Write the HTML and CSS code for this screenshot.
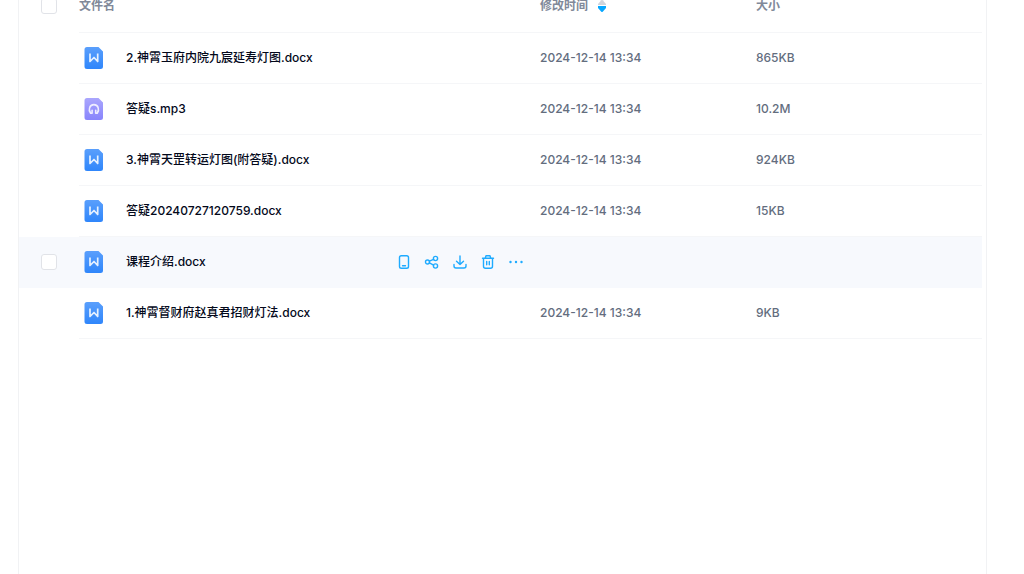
FILE: index.html
```html
<!DOCTYPE html>
<html lang="zh-CN">
<head>
<meta charset="utf-8">
<title>文件列表</title>
<link rel="stylesheet" href="styles.css">
</head>
<body>
<svg class="defs" aria-hidden="true">
  <defs>
    <linearGradient id="blue" x1="0" y1="0" x2="0" y2="1"><stop offset="0" stop-color="#5a9ffc"/><stop offset="1" stop-color="#2f86fb"/></linearGradient>
    <linearGradient id="violet" x1="0" y1="0" x2="0" y2="1"><stop offset="0" stop-color="#aaa6fd"/><stop offset="1" stop-color="#8884fc"/></linearGradient>
    <symbol id="word" viewBox="0 0 20 22">
      <path fill="url(#blue)" d="M3 0h11.500L19 4.500v15a2.500 2.500 0 0 1-2.500 2.500H3a2.500 2.500 0 0 1-2.500-2.500V2.500A2.500 2.500 0 0 1 3 0z"/>
      <path fill="none" stroke="#e6f1ff" stroke-width="1.700" stroke-linejoin="round" d="M6 6.500v8l4-4 3.700 4V6.500"/>
    </symbol>
    <symbol id="audio" viewBox="0 0 20 22">
      <path fill="url(#violet)" d="M3 0h11.500L19 4.500v15a2.500 2.500 0 0 1-2.500 2.500H3a2.500 2.500 0 0 1-2.500-2.500V2.500A2.500 2.500 0 0 1 3 0z"/>
      <path fill="none" stroke="#eeedff" stroke-width="1.600" stroke-linecap="round" stroke-linejoin="round" d="M8.100 12.300v3H6.600C5.400 13.500 5 11.500 5.600 9.800a4.500 4.500 0 0 1 8.600 0c.6 1.700.2 3.700-1 5.500h-1.500v-3"/>
    </symbol>
  </defs>
</svg>
<main class="panel">
  <table class="files">
    <colgroup><col class="col-check"><col><col class="col-date"><col class="col-size"></colgroup>
    <thead>
      <tr>
        <th class="check"><input type="checkbox" class="box" aria-label="全选"></th>
        <th>文件名</th>
        <th><button type="button" class="sort">修改时间<svg width="8" height="14" viewBox="0 0 8 14" aria-hidden="true"><path fill="#d0d4dc" d="M3.300 1.300a1 1 0 0 1 1.400 0L8 5v1H0V5z"/><path fill="#06a7ff" d="M0 7h8v2l-3.300 3.700a1 1 0 0 1-1.400 0L0 9z"/></svg></button></th>
        <th>大小</th>
      </tr>
    </thead>
    <tbody>
      <tr>
        <td class="check"></td>
        <td><div class="name"><svg class="icon"><use href="#word"/></svg><a href="#">2.神霄玉府内院九宸延寿灯图.docx</a></div></td>
        <td>2024-12-14 13:34</td><td>865KB</td>
      </tr>
      <tr>
        <td class="check"></td>
        <td><div class="name"><svg class="icon"><use href="#audio"/></svg><a href="#">答疑s.mp3</a></div></td>
        <td>2024-12-14 13:34</td><td>10.2M</td>
      </tr>
      <tr>
        <td class="check"></td>
        <td><div class="name"><svg class="icon"><use href="#word"/></svg><a href="#">3.神霄天罡转运灯图(附答疑).docx</a></div></td>
        <td>2024-12-14 13:34</td><td>924KB</td>
      </tr>
      <tr>
        <td class="check"></td>
        <td><div class="name"><svg class="icon"><use href="#word"/></svg><a href="#">答疑20240727120759.docx</a></div></td>
        <td>2024-12-14 13:34</td><td>15KB</td>
      </tr>
      <tr class="active">
        <td class="check"><input type="checkbox" class="box" aria-label="选择 课程介绍.docx"></td>
        <td>
          <div class="name"><svg class="icon"><use href="#word"/></svg><a href="#">课程介绍.docx</a>
            <div class="actions">
              <button type="button" aria-label="发送到手机"><svg viewBox="0 0 16 16"><rect x="3.500" y="1.700" width="9" height="12.600" rx="1.800"/><path d="M6.500 11.700h3"/></svg></button>
              <button type="button" aria-label="分享"><svg viewBox="0 0 16 16"><circle cx="3.500" cy="8" r="2"/><circle cx="11.500" cy="4.500" r="2.100"/><circle cx="11.500" cy="12" r="2.100"/><path d="M5.400 7.200L9.600 5.300M5.400 8.900l4.200 2.200"/></svg></button>
              <button type="button" aria-label="下载"><svg viewBox="0 0 16 16"><path d="M8 2v8.500M4.500 7.300L8 10.600l3.500-3.300M2 10.500v1.500A2 2 0 0 0 4 14h8a2 2 0 0 0 2-2v-1.500"/></svg></button>
              <button type="button" aria-label="删除"><svg viewBox="0 0 16 16"><path d="M2.500 4.200h11M5.300 4l.7-2.200h4l.7 2.200M3.500 4.200v8.100a2 2 0 0 0 2 2h5a2 2 0 0 0 2-2V4.200M6.700 7.500v3.200M9.300 7.500v3.200"/></svg></button>
              <button type="button" aria-label="更多"><svg viewBox="0 0 16 16"><path class="dots" d="M2.500 8h.01M8 8h.01M13.500 8h.01"/></svg></button>
            </div>
          </div>
        </td>
        <td></td><td></td>
      </tr>
      <tr>
        <td class="check"></td>
        <td><div class="name"><svg class="icon"><use href="#word"/></svg><a href="#">1.神霄督财府赵真君招财灯法.docx</a></div></td>
        <td>2024-12-14 13:34</td><td>9KB</td>
      </tr>
    </tbody>
  </table>
</main>
</body>
</html>
```
FILE: styles.css
```css
* { box-sizing: border-box; }

body {
  margin: 0;
  height: 100vh;
  overflow: hidden;
  background: #fff;
  color: #03081a;
  font: 500 12px/18px Inter, "Noto Sans CJK SC", sans-serif;
}

.defs { position: absolute; width: 0; height: 0; }

/* The list is scrolled slightly, so its header is cut by the window's top. */
.panel {
  margin: -20px 37px 0 18px;
  min-height: calc(100vh + 20px);
  padding-right: 4px;
  border: 1px solid #f1f2f4;
  border-width: 0 1px;
}

.files {
  width: 100%;
  table-layout: fixed;
  border-collapse: separate;
  border-spacing: 0;
}

.col-check { width: 60px; }
.col-date { width: 216px; }
.col-size { width: 226px; }

th, td {
  height: 51px;
  padding: 0;
  border-bottom: 1px solid #f5f6f8;
  text-align: left;
  vertical-align: middle;
}

th {
  height: 53px;
  color: #818999;
  font-weight: 700;
  line-height: 12px;
}

td { color: #636d7e; }

.check {
  padding-left: 22px;
  border-bottom-color: transparent;
}

.active td { background: #f7f9fd; border-bottom-color: #f7f9fd; }

.box {
  display: block;
  appearance: none;
  width: 16px;
  height: 16px;
  margin: 0;
  border: 1px solid #e1e3e8;
  border-radius: 3px;
  background: #fff;
}

button {
  padding: 0;
  border: 0;
  background: none;
  color: inherit;
  font: inherit;
  cursor: pointer;
}

.sort { display: flex; align-items: center; gap: 10px; }

.name { display: flex; align-items: center; padding-left: 5px; }
.name a { color: #03081a; text-decoration: none; }

.icon { width: 20px; height: 22px; margin-right: 22px; }

.actions {
  display: flex;
  gap: 12px;
  margin-left: auto;
  padding-right: 16px;
  color: #1fabff;
}

.actions svg {
  display: block;
  width: 16px;
  height: 16px;
  fill: none;
  stroke: currentColor;
  stroke-width: 1.4;
  stroke-linecap: round;
  stroke-linejoin: round;
}

.actions .dots { stroke-width: 2.4; }
```
